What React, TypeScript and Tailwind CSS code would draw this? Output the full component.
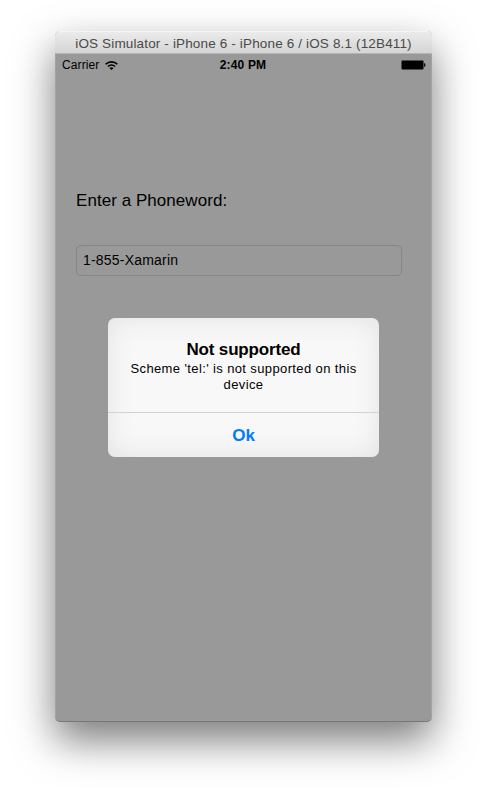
function WifiIcon() {
  return (
    <svg className="ml-[6px] h-[9px] w-[13px]" viewBox="0 0 13 9" fill="none" stroke="#000" strokeWidth="1.6">
      <path d="M0.6 3.3C3.9 0 9.1 0 12.4 3.3" />
      <path d="M2.9 5.5C4.9 3.5 8.1 3.5 10.1 5.5" />
      <path d="M6.5 9L4.4 6.9C5.6 5.9 7.4 5.9 8.6 6.9Z" fill="#000" stroke="none" />
    </svg>
  );
}

function BatteryIcon() {
  return (
    <svg className="h-[10px] w-[25px]" viewBox="0 0 25 10">
      <rect x="0.25" y="0.25" width="22.5" height="9.5" rx="1.4" fill="#333" />
      <rect x="1" y="1" width="21" height="8" rx="0.8" fill="#000" />
      <path d="M23.1 3C25 3.7 25 6.3 23.1 7Z" fill="#000" />
    </svg>
  );
}

function TitleBar() {
  return (
    <header className="flex h-[23px] shrink-0 items-center justify-center border-t border-b border-t-[#f5f5f5] border-b-[#b5b5b5] bg-gradient-to-b from-[#ebebeb] to-[#d5d5d5] pt-[2px]">
      <h1 className="whitespace-nowrap text-[13.5px] leading-[18px] tracking-[0.15px] text-[#4a4a4a]">
        iOS Simulator - iPhone 6 - iPhone 6 / iOS 8.1 (12B411)
      </h1>
    </header>
  );
}

function StatusBar() {
  return (
    <div className="grid h-[22px] shrink-0 grid-cols-[1fr_auto_1fr] items-center border-x border-[#a3a3a3] pr-[5px] pl-[6px] text-[12px] leading-5">
      <div className="flex items-center">
        <span className="tracking-[0.1px]">Carrier</span>
        <WifiIcon />
      </div>
      <span className="mr-[2px] font-bold tracking-[0.15px]">2:40 PM</span>
      <div className="flex justify-end"><BatteryIcon /></div>
    </div>
  );
}

function Alert() {
  return (
    <div role="alertdialog" className="absolute top-[287px] left-[53px] flex h-[139px] w-[271px] flex-col overflow-hidden rounded-[7px] bg-[#f8f8f8] text-center shadow-[inset_0_0_28px_rgba(0,0,0,0.09)]">
      <div className="h-[95px] border-b border-[#d2d2d2] pt-[21px]">
        <h2 className="text-[17px] leading-[21px] font-bold tracking-[-0.15px]">Not supported</h2>
        <p className="pt-px text-[13px] leading-4 tracking-[0.38px]">
          Scheme 'tel:' is not supported on this<br />device
        </p>
      </div>
      <button className="h-[44px] pt-px text-[17px] font-bold text-[#007aff]">Ok</button>
    </div>
  );
}

export default function App() {
  return (
    <main className="h-[801px] w-[487px] overflow-hidden bg-white pt-[31px] pl-[55px] font-['Liberation_Sans',sans-serif] text-black antialiased">
      <div className="relative h-[691px] w-[377px] rounded-[5px] shadow-[0_18px_40px_rgba(0,0,0,0.52)]">
        <section className="flex h-full flex-col overflow-hidden rounded-[5px] border-b border-[#777] bg-[#999]">
          <TitleBar />
          <StatusBar />
          <div className="flex flex-1 flex-col border-x border-[#a3a3a3] pt-[115px] pl-5">
            <label className="text-[17px] leading-5 tracking-[0.05px]">Enter a Phoneword:</label>
            <div className="mt-[34px] flex h-[31px] w-[326px] items-center rounded-[5px] border border-[#868686] pl-[6px] text-[14px] tracking-[0.2px]">
              1-855-Xamarin
            </div>
          </div>
        </section>
        <Alert />
      </div>
    </main>
  );
}
